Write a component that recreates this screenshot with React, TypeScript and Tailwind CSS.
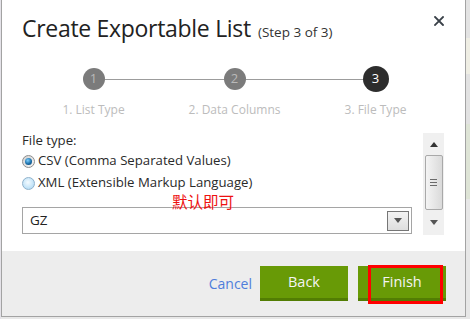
import React from 'react';

const font = { fontFamily: '"Open Sans", "Noto Sans", "Liberation Sans", sans-serif' };

function StepDot({ n, active }: { n: number; active?: boolean }) {
  return active ? (
    <div className="flex h-[26px] w-[26px] shrink-0 items-center justify-center rounded-full bg-[#2d2d2d] text-[13px] text-white">
      {n}
    </div>
  ) : (
    <div className="flex h-[22px] w-[22px] shrink-0 items-center justify-center rounded-full bg-[#7b7b7b] text-[13px] text-[#b9b9b9]">
      {n}
    </div>
  );
}

function Step({ n, label, first, last, active }: { n: number; label: string; first?: boolean; last?: boolean; active?: boolean }) {
  return (
    <div className="flex flex-col items-center">
      <div className="flex h-[26px] w-full items-center">
        <div className={first ? 'h-px flex-1' : 'h-px flex-1 bg-[#9c9c9c]'} />
        <StepDot n={n} active={active} />
        <div className={last ? 'h-px flex-1' : 'h-px flex-1 bg-[#9c9c9c]'} />
      </div>
      <div className="mt-[9px] text-[12px] leading-[18px] text-[#bcbcbc]">{label}</div>
    </div>
  );
}

function Radio({ checked, label }: { checked?: boolean; label: string }) {
  return (
    <label className="flex h-[22px] items-center gap-[3px]">
      {checked ? (
        <span className="flex h-[13px] w-[13px] items-center justify-center rounded-full border border-[#8d8d8d] bg-[linear-gradient(135deg,#d2d2d2,#f6f6f6)]">
          <span className="h-[7px] w-[7px] rounded-full bg-[radial-gradient(circle_at_40%_35%,#7fd0ff,#1a6ea8_55%,#0b3a63)]" />
        </span>
      ) : (
        <span className="h-[13px] w-[13px] rounded-full border border-[#8fb2cc] bg-[radial-gradient(circle_at_45%_40%,#f4fbff,#c4e4f8_60%,#a6d2ef)]" />
      )}
      <span className="text-[13.2px] text-[#2a2a2a]">{label}</span>
    </label>
  );
}

function Arrow({ down }: { down?: boolean }) {
  return (
    <svg width="8" height="5" viewBox="0 0 8 5">
      <path d={down ? 'M0 0H8L4 5Z' : 'M0 5H8L4 0Z'} fill={down ? '#555' : '#333'} />
    </svg>
  );
}

export default function App() {
  return (
    <div className="flex h-[319px] w-[470px] bg-[#e8e8e8]" style={font}>
      <div className="w-px bg-[#e4e2e8]" />
      <div className="flex h-[317px] w-[465px] flex-col border-x border-b border-[#a3a3a3] bg-white">
        <div className="flex items-start justify-between pl-5 pr-[21px] pt-[12px]">
          <div className="flex items-baseline gap-[7px]">
            <span className="text-[23px] leading-[32px] tracking-[-0.3px] text-[#222]">Create Exportable List</span>
            <span className="text-[13.5px] text-[#333]">(Step 3 of 3)</span>
          </div>
          <svg width="10" height="10" viewBox="0 0 10 10" className="mt-[4px]">
            <path d="M1 1L9 9M9 1L1 9" stroke="#394048" strokeWidth="1.8" strokeLinecap="square" />
          </svg>
        </div>

        <div className="mt-[22px] grid w-[444px] grid-cols-3 pl-[21px]">
          <Step n={1} label="1. List Type" first />
          <Step n={2} label="2. Data Columns" />
          <Step n={3} label="3. File Type" last active />
        </div>

        <div className="mt-[11px] flex pl-5">
          <div className="relative w-[390px]">
            <div className="text-[13.2px] leading-[20px] text-[#2a2a2a]">File type:</div>
            <Radio checked label="CSV (Comma Separated Values)" />
            <Radio label="XML (Extensible Markup Language)" />
            <span
              className="absolute left-[150px] top-[61px] text-[15.5px] leading-[20px] text-[#ee1111]"
              style={{ fontFamily: '"Noto Sans CJK SC", sans-serif' }}
            >
              默认即可
            </span>
            <div className="mt-[13px] flex h-[27px] items-center justify-between border border-[#a5a5a5] pl-[7px] pr-[2px]">
              <span className="text-[13.5px] text-[#222]">GZ</span>
              <div className="flex h-[20px] w-[22px] items-center justify-center border border-[#767676] bg-[linear-gradient(#f3f3f3,#dedede)]">
                <Arrow down />
              </div>
            </div>
          </div>
          <div className="ml-[11px] mt-[3px] flex h-[102px] w-[21px] flex-col items-center bg-[#f0f0f0]">
            <div className="flex h-[22px] items-center">
              <Arrow />
            </div>
            <div className="flex h-[55px] w-[18px] flex-col items-center justify-center gap-[2px] rounded-[2px] border border-[#a9a9a9] bg-[linear-gradient(90deg,#f4f4f4,#dadada)]">
              <div className="h-px w-[7px] bg-[#6b6b6b]" />
              <div className="h-px w-[7px] bg-[#6b6b6b]" />
              <div className="h-px w-[7px] bg-[#6b6b6b]" />
            </div>
            <div className="flex flex-1 items-center">
              <Arrow down />
            </div>
          </div>
        </div>

        <div className="mt-auto flex h-[65px] items-center justify-end gap-[10px] bg-[#ededed] pr-[19px]">
          <span className="mr-[-2px] text-[14px] text-[#4f7ddb]">Cancel</span>
          <button className="h-[35px] w-[88px] border-b-[3px] border-[#527d03] bg-[#689a06] text-[14.5px] text-[#f4f4f4]">
            Back
          </button>
          <div className="relative">
            <button className="h-[35px] w-[88px] border-b-[3px] border-[#527d03] bg-[#689a06] text-[14.5px] text-[#f4f4f4]">
              Finish
            </button>
            <div className="absolute left-[10px] top-[-1px] h-[39px] w-[75px] border-[3px] border-[#ff0000]" />
          </div>
        </div>
      </div>
      <div className="flex w-[4px] flex-col">
        <div className="h-[38px] bg-[#e3e3e3]" />
        <div className="h-[36px] bg-[#efeee4]" />
        <div className="h-[50px] bg-[#e2e2e2]" />
        <div className="h-[75px] bg-[#dee4d6]" />
        <div className="flex-1 bg-[#e7e7e7]" />
      </div>
    </div>
  );
}
